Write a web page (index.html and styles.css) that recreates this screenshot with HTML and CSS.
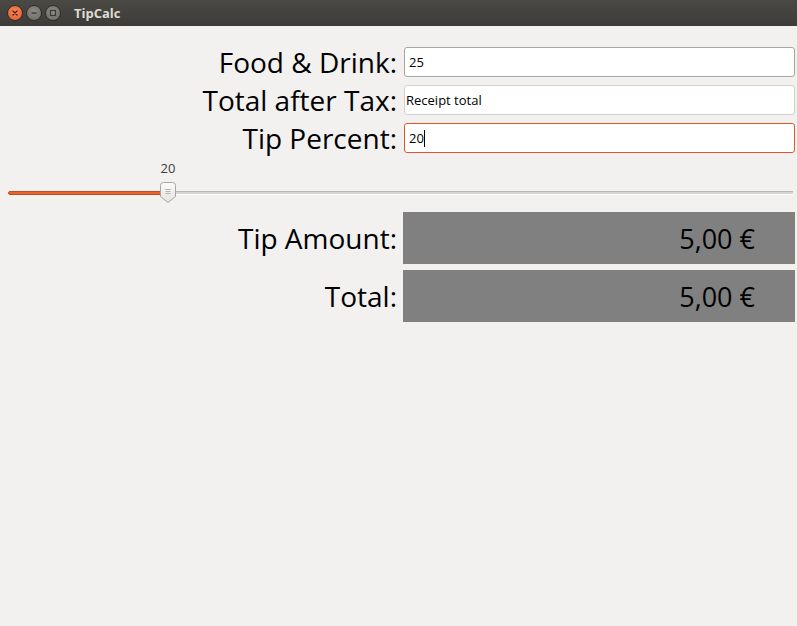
FILE: index.html
```html
<!DOCTYPE html>
<html>
<head>
<meta charset="utf-8">
<link rel="stylesheet" href="styles.css">
</head>
<body>
<div class="window">
  <header class="titlebar">
    <div class="controls">
      <span class="btn close"><svg width="10" height="10" viewBox="0 0 10 10"><path d="M3 3 L7 7 M7 3 L3 7" stroke="#5a1a08" stroke-width="1.3" stroke-linecap="round"/></svg></span>
      <span class="btn"><svg width="10" height="10" viewBox="0 0 10 10"><path d="M2.5 5 H7.5" stroke="#3a3935" stroke-width="1.4"/></svg></span>
      <span class="btn"><svg width="10" height="10" viewBox="0 0 10 10"><rect x="2.5" y="2.5" width="5" height="5" fill="none" stroke="#3a3935" stroke-width="1.2"/></svg></span>
    </div>
    <span class="title">TipCalc</span>
  </header>
  <main class="content">
    <div class="form">
      <label class="lbl">Food &amp; Drink:</label>
      <div class="field"><span class="val">25</span></div>
      <label class="lbl">Total after Tax:</label>
      <div class="field light"><span class="val">Receipt total</span></div>
      <label class="lbl">Tip Percent:</label>
      <div class="field focus"><span class="val">20</span><span class="caret"></span></div>
    </div>
    <div class="slider">
      <div class="slider-value"><span>20</span></div>
      <div class="track">
        <div class="fill"></div>
        <div class="rest"></div>
        <div class="handle">
          <svg width="16" height="22" viewBox="0 0 16 22">
            <defs><linearGradient id="hg" x1="0" y1="0" x2="0" y2="1"><stop offset="0" stop-color="#fbfbfa"/><stop offset="1" stop-color="#e4e2df"/></linearGradient></defs>
            <path d="M3.5 0.5 H12.5 Q15.5 0.5 15.5 3.5 V14.5 L8 20.5 L0.5 14.5 V3.5 Q0.5 0.5 3.5 0.5 Z" fill="url(#hg)" stroke="#a8a6a2"/>
            <path d="M5.5 7.5 H10.5 M5.5 9.5 H10.5 M5.5 11.5 H10.5" stroke="#b5b3af" stroke-width="1"/>
          </svg>
        </div>
      </div>
    </div>
    <div class="results">
      <label class="lbl">Tip Amount:</label>
      <div class="out"><span>5,00 €</span></div>
      <label class="lbl">Total:</label>
      <div class="out"><span>5,00 €</span></div>
    </div>
  </main>
</div>
</body>
</html>
```
FILE: styles.css
```css
html, body {
  margin: 0;
  padding: 0;
}
body {
  width: 797px;
  height: 626px;
  background: #f2f1f0;
  font-family: "Open Sans", "Noto Sans", sans-serif;
  overflow: hidden;
}
.window {
  display: flex;
  flex-direction: column;
  height: 626px;
}
.titlebar {
  height: 26px;
  background: linear-gradient(#4a4944, #3d3c38);
  display: flex;
  align-items: center;
  box-sizing: border-box;
  padding-left: 7px;
}
.controls {
  display: flex;
  gap: 3px;
}
.btn {
  width: 16px;
  height: 16px;
  border-radius: 50%;
  background: radial-gradient(circle at 50% 40%, #8f8d87, #6a6863);
  border: 1px solid #2f2e2b;
  box-sizing: border-box;
  display: flex;
  align-items: center;
  justify-content: center;
}
.btn.close {
  background: radial-gradient(circle at 50% 40%, #f58c5d, #e0552a);
  border-color: #3a2a22;
}
.title {
  margin-left: 13px;
  color: #dfdbd2;
  font-weight: bold;
  font-size: 13px;
  font-family: "Open Sans", sans-serif;
}
.content {
  padding: 21px 2px 0 0;
}
.form {
  display: grid;
  grid-template-columns: 397px 1fr;
  column-gap: 7px;
  row-gap: 8px;
  align-items: center;
}
.lbl {
  text-align: right;
  font-size: 28px;
  color: #000;
  line-height: 30px;
}
.field {
  height: 30px;
  box-sizing: border-box;
  border: 1px solid #a9a7a3;
  border-radius: 3px;
  background: #fff;
  display: flex;
  align-items: center;
  padding-left: 4px;
  font-size: 13px;
  color: #000;
}
.field.light {
  border-color: #d3d1cd;
  padding-left: 1px;
}
.field.focus {
  border-color: #e0582a;
}
.caret {
  width: 1px;
  height: 17px;
  background: #000;
}
.slider {
  margin-top: 6px;
  padding-left: 8px;
}
.slider-value {
  width: 320px;
  height: 22px;
  font-size: 13px;
  color: #3c3c3c;
}
.slider-value span {
  display: block;
  width: 320px;
  text-align: center;
}
.track {
  position: relative;
  display: flex;
  align-items: center;
  height: 24px;
  width: 785px;
}
.fill {
  width: 160px;
  height: 4px;
  background: #e9642f;
  border: 1px solid #c44e21;
  border-radius: 2px;
  box-sizing: border-box;
}
.rest {
  flex: 1;
  height: 4px;
  background: #d8d6d2;
  border-top: 1px solid #b9b7b3;
  border-bottom: 1px solid #ffffff;
  box-sizing: border-box;
}
.handle {
  position: absolute;
  left: 152px;
  top: 1px;
  width: 16px;
  height: 22px;
}
.results {
  display: grid;
  grid-template-columns: 397px 1fr;
  column-gap: 6px;
  row-gap: 6px;
  margin-top: 7px;
  align-items: center;
}
.out {
  height: 52px;
  background: #808080;
  display: flex;
  align-items: center;
  justify-content: flex-end;
  padding-right: 40px;
  font-size: 27px;
  color: #000;
}
```
